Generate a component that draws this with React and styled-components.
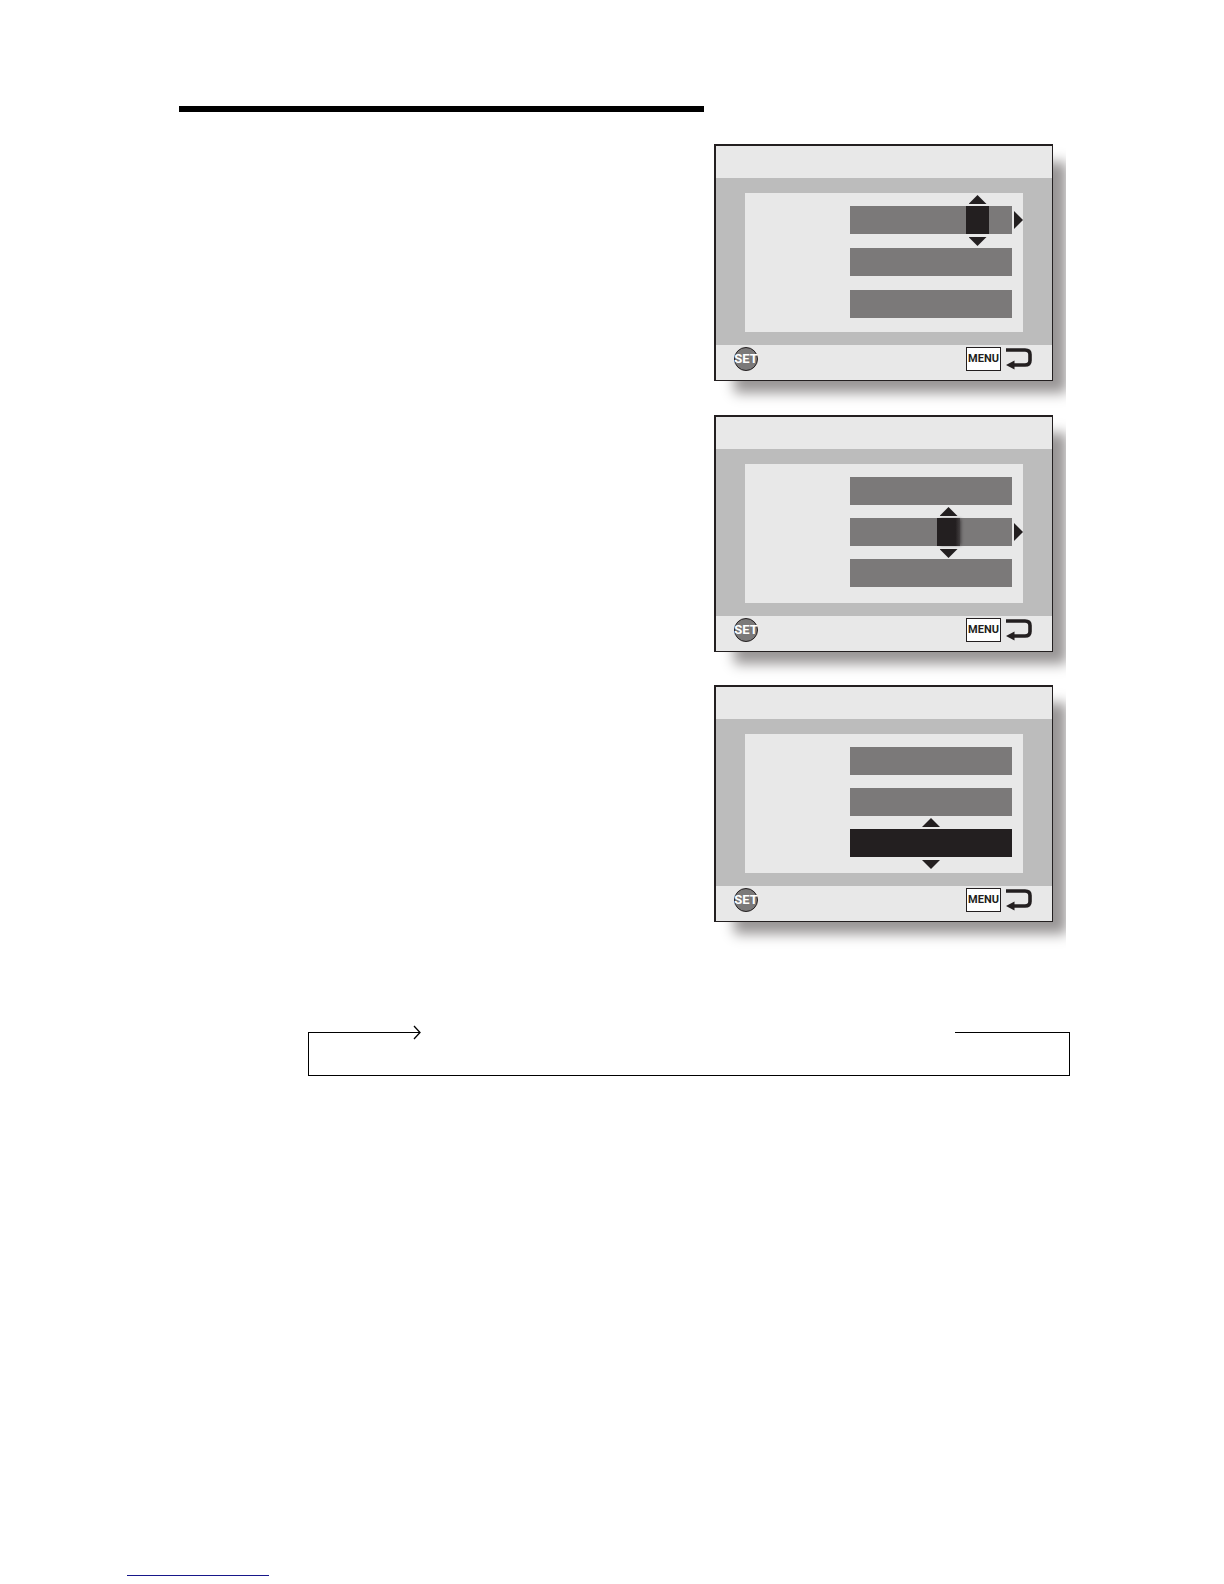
import React from "react";
import styled, { createGlobalStyle } from "styled-components";

const INK = "#231f20";
const LIGHT = "#e8e8e8";
const MID = "#bcbcbc";
const FIELD = "#7b7979";

const GlobalStyle = createGlobalStyle`
  * { box-sizing: border-box; }
  body {
    margin: 0;
    background: #fff;
    font-family: Roboto, "Liberation Sans", Arial, sans-serif;
  }
`;

const Page = styled.div`
  min-height: 100vh;
  display: flex;
  flex-direction: column;
`;

const Main = styled.main`
  padding: 106px 154px 0 179px;
`;

const Columns = styled.div`
  display: grid;
  grid-template-columns: minmax(0, 1fr) 356px;
  column-gap: 10px;
`;

const Rule = styled.hr`
  width: 100%;
  height: 6px;
  margin: 0;
  border: 0;
  background: #000;
  align-self: start;
`;

const ScreenList = styled.div`
  padding: 38px 4px 0 0;
`;

const ScreenSlot = styled.div`
  margin-top: ${(p) => p.$before}px;
  padding-right: 13px;
  overflow-x: clip;
  overflow-y: visible;
`;

const Screen = styled.section`
  border: solid ${INK};
  border-width: 2px 1px 1px 2px;
  background: ${LIGHT};
  box-shadow: 17px 15px 12px -3px #999696;
`;

const TitleBar = styled.div`
  height: 32px;
`;

const ScreenBody = styled.div`
  padding: 15px 29px 13px;
  background: ${MID};
`;

const Form = styled.div`
  height: 139px;
  padding: 13px 11px 0;
  display: flex;
  flex-direction: column;
  align-items: flex-end;
  gap: ${(p) => p.$gap}px;
  background: ${LIGHT};
`;

const Field = styled.div`
  position: relative;
  width: 162px;
  height: 28px;
  padding-right: ${(p) => p.$end}px;
  display: flex;
  justify-content: flex-end;
  background: ${FIELD};
`;

const Cursor = styled.div`
  position: relative;
  width: ${(p) => p.$width};
  background: ${(p) =>
    p.$soft ? `linear-gradient(to right, ${INK} 80%, #433f40)` : INK};
  box-shadow: ${(p) => (p.$soft ? "2px 0 3px -1px #433f40" : "none")};
`;

const StepButton = styled.button`
  position: absolute;
  display: block;
  padding: 0;
  border: 0;
  background: ${INK};
`;

const UpButton = styled(StepButton)`
  left: calc(50% - 9px);
  bottom: calc(100% + 2px);
  width: 18px;
  height: 9px;
  clip-path: polygon(50% 0, 100% 100%, 0 100%);
`;

const DownButton = styled(StepButton)`
  left: calc(50% - 9px);
  top: calc(100% + 3px);
  width: 18px;
  height: 9px;
  clip-path: polygon(0 0, 100% 0, 50% 100%);
`;

const NextButton = styled(StepButton)`
  left: calc(100% + 2px);
  top: 5px;
  width: 9px;
  height: 18px;
  clip-path: polygon(0 0, 100% 50%, 0 100%);
`;

const KeyBar = styled.div`
  height: 35px;
  padding: 2px 20px 0 18px;
  display: flex;
  align-items: flex-start;
  justify-content: space-between;
`;

const Key = styled.button`
  height: 24px;
  padding: 0;
  display: flex;
  align-items: center;
  justify-content: center;
  border: 1px solid ${INK};
  font-family: Roboto, "Liberation Sans", Arial, sans-serif;
  font-weight: 700;
  line-height: 22px;
`;

const SetKey = styled(Key)`
  width: 24px;
  border-radius: 50%;
  background: ${FIELD};
  color: #fff;
  font-size: 13px;
`;

const MenuKey = styled(Key)`
  width: 35px;
  background: #fff;
  color: ${INK};
  font-size: 11px;
`;

const BackGroup = styled.div`
  display: flex;
  gap: 5px;
`;

const Loop = styled.div`
  height: 44px;
  margin: 110px 0 0 129px;
  display: flex;
  justify-content: space-between;
  border-bottom: 1px solid #000;
`;

const LoopStart = styled.div`
  position: relative;
  width: 112px;
  border: solid #000;
  border-width: 1px 0 0 1px;
`;

const LoopEnd = styled.div`
  width: 115px;
  border: solid #000;
  border-width: 1px 1px 0 0;
`;

const ArrowHead = styled.svg`
  position: absolute;
  right: -1px;
  top: -8px;
`;

const Footer = styled.footer`
  margin-top: auto;
  padding: 0 0 8px 127px;
`;

const FooterLink = styled.a`
  display: block;
  width: 142px;
  height: 16px;
  border-bottom: 1px solid #17178a;
`;

function ReturnIcon() {
  return (
    <svg width="26" height="24" viewBox="0 0 26 24" aria-hidden="true">
      <path d="M0 3H19Q24 3 24 7.500V13.500Q24 18 19 18H7" fill="none" stroke={INK} strokeWidth="3.600" />
      <path d="M0 18L8.500 13.500V22.500Z" fill={INK} />
    </svg>
  );
}

function DateField({ cursor }) {
  return (
    <Field $end={cursor ? cursor.end : 0}>
      {cursor && (
        <Cursor $width={cursor.width} $soft={cursor.soft}>
          <UpButton type="button" aria-label="Up" />
          <DownButton type="button" aria-label="Down" />
        </Cursor>
      )}
      {cursor && cursor.next && <NextButton type="button" aria-label="Next" />}
    </Field>
  );
}

const screens = [
  { before: 0, gap: 14, active: 0, cursor: { width: "23px", end: 23, next: true } },
  { before: 34, gap: 13, active: 1, cursor: { width: "23px", end: 52, next: true, soft: true } },
  { before: 33, gap: 13, active: 2, cursor: { width: "100%", end: 0 } },
];

function SettingScreen({ before, gap, active, cursor }) {
  return (
    <ScreenSlot $before={before}>
      <Screen>
        <TitleBar />
        <ScreenBody>
          <Form $gap={gap}>
            {[0, 1, 2].map((row) => (
              <DateField key={row} cursor={row === active ? cursor : null} />
            ))}
          </Form>
        </ScreenBody>
        <KeyBar>
          <SetKey type="button">SET</SetKey>
          <BackGroup>
            <MenuKey type="button">MENU</MenuKey>
            <ReturnIcon />
          </BackGroup>
        </KeyBar>
      </Screen>
    </ScreenSlot>
  );
}

export default function App() {
  return (
    <Page>
      <GlobalStyle />
      <Main>
        <Columns>
          <Rule />
          <ScreenList>
            {screens.map((screen) => (
              <SettingScreen key={screen.active} {...screen} />
            ))}
          </ScreenList>
        </Columns>
        <Loop>
          <LoopStart>
            <ArrowHead width="8" height="15" viewBox="0 0 8 15" aria-hidden="true">
              <path d="M1 1L7 7.500L1 14" fill="none" stroke="#000" strokeWidth="1.300" />
            </ArrowHead>
          </LoopStart>
          <LoopEnd />
        </Loop>
      </Main>
      <Footer>
        <FooterLink href="#top" aria-label="Top of page" />
      </Footer>
    </Page>
  );
}
